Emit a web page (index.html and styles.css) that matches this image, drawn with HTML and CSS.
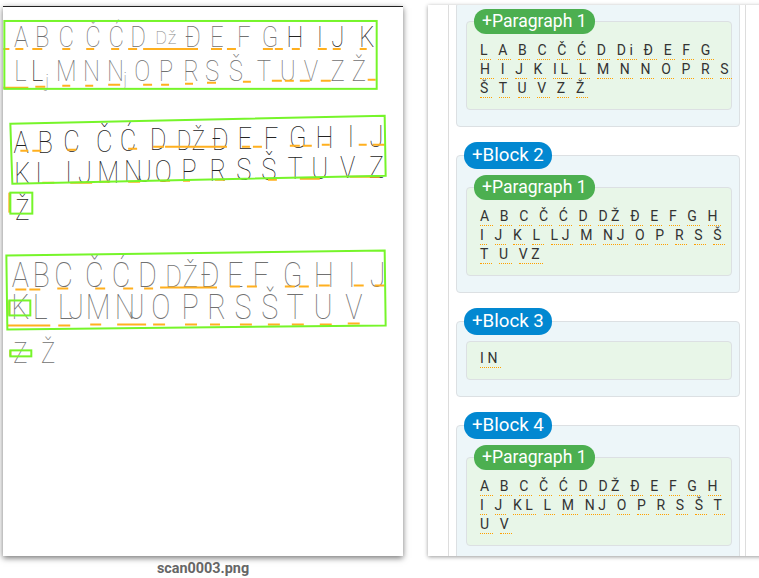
FILE: index.html
```html
<!DOCTYPE html>
<html>
<head>
    <meta charset="utf-8">
    <link rel="stylesheet" href="styles.css">
</head>
<body>
    <div class="page">
        <figure class="scan">
            <svg class="scanImage" viewBox="3 6 400 550" width="400" height="550">
                <!-- first try -->
                <g transform="scale(.8 1)">
                    <text class="hand light f30" x="26 52.5 82.5 116 145 172.5" y="46">ABCČĆD</text>
                    <text class="hand light f30" x="241 271 305 337.5" y="46">ĐEFG</text>
                    <text class="hand dark f30" x="369 400 422.5 459" y="46">HIJK</text>
                    <text class="hand light f30" x="25" y="80">L</text>
                    <text class="hand dark f30" x="46" y="80">L</text>
                    <text class="hand light f30" x="82.5 114 144" y="80">MNN</text>
                    <text class="hand light f30" x="177.5 207.5 239 265 295 330 360 389 422.5 449" y="80">OPRSŠTUVZŽ</text>
                </g>
                <text class="hand small" x="161 172" y="43">Dž</text>
                <text class="hand small" x="47" y="86">j</text>
                <text class="hand small" x="125" y="84">j</text>
                <path class="mark" d="M3 48H9M15 48H23M32 48H42M62 48H70M86 48H94M111 48H119M128 48H137M143 48H198M211 48H222M227 48H236M263 48H273M275 48H283M292 48H300M318 48H327M333 48H341M360 48H367"/>
                <path class="mark" d="M3 87H28M35 86H45M62 85H70M85 85H93M108 84H120M143 84H152M161 84H169M185 83H193M207 82H216M243 81H251M272 80H282M285 80H294M300 80H310M321 80H331M368 79H376"/>
                <rect class="box" x="4" y="20" width="373" height="68"/>

                <!-- second try, the sheet is a bit skewed here -->
                <g transform="scale(.8 1)">
                    <text class="hand dark f32" x="26 56 89 130 160 197.5" y="152 152 151 151 150 149">ABCČĆD</text>
                    <text class="hand dark f28" x="230" y="149">D</text>
                    <text class="hand dark f28" x="248" y="149">Ž</text>
                    <text class="hand dark f32" x="275 306 339 372.5 406 439 471" y="149 148 148 147 147 146 146">ĐEFGHIJ</text>
                    <text class="hand dark f32" x="27.5 52.5 90 106 135 166 181 204 236 272.5 305 336 369 400 435 471" y="183 183 182 182 182 181 181 181 180 180 179 179 178 178 177 177">KLLJMNJOPRSŠTUVZ</text>
                </g>
                <path class="mark" d="M20 150H28M32 150H41M67 149H76M128 148H137M153 146H164M165 146H227M242 146H250M253 146H262M290 145H300M303 145H312M322 144H330M359 144H367M373 144H385"/>
                <path class="mark" d="M42 182H54M70 182H92M100 181H110M128 181H140M160 180H170M183 180H190M215 179H225M268 179H277M300 178H320M350 176H380"/>
                <polygon class="box" points="10,123 385,115 386,175 12,183"/>
                <g transform="scale(.8 1)">
                    <text class="hand dark f30" x="27.5" y="219">Ž</text>
                </g>
                <path class="mark" d="M9 192V212"/>
                <rect class="box" x="10" y="192" width="22" height="21"/>

                <!-- third try -->
                <g transform="scale(.8 1)">
                    <text class="hand light f36" x="25 51 79 117.5 151 184" y="287">ABCČĆD</text>
                    <text class="hand light f32" x="217" y="287">D</text>
                    <text class="hand light f32" x="238" y="287">Ž</text>
                    <text class="hand light f36" x="262.5 294 326 366 405 440 472.5" y="287">ĐEFGHIJ</text>
                    <text class="hand light f36" x="25 50 81 95 122.5 156 171 201 237.5 271 304 337.5 369 404 442.5" y="319">KLLJMNJOPRSŠTUV</text>
                    <text class="hand light f30" x="25 60" y="363">ZŽ</text>
                </g>
                <path class="mark" d="M15 289H26M29 289H40M57 288H68M95 288H105M123 288H133M144 288H153M160 287H217M230 286H240M247 286H257M285 286H295M299 286H309M319 285H330M354 285H364M375 285H385"/>
                <path class="mark" d="M7 325H50M58 325H70M90 324H101M117 324H146M153 324H165M185 324H197M210 324H220M240 324H252M268 324H280M292 324H304M320 324H332M348 323H360"/>
                <polygon class="box" points="6,255 385,250 386,325 7,329"/>
                <path class="mark" d="M9 300V315M10 350V356"/>
                <rect class="box" x="9" y="300" width="21" height="15"/>
                <rect class="box" x="10" y="350" width="21" height="6"/>
            </svg>
            <figcaption class="caption">scan0003.png</figcaption>
        </figure>

        <div class="panel">
            <div class="stream">
                <section class="block">
                    <div class="para hasPill">
                        <div class="pill paraPill">+Paragraph 1</div>
                        <p class="words"><span>L</span> <span>A</span> <span>B</span> <span>C</span> <span>Č</span> <span>Ć</span> <span>D</span> <span>Di</span> <span>Đ</span> <span>E</span> <span>F</span> <span>G</span> <span>H</span> <span>I</span> <span>J</span> <span>K</span> <span>IL</span> <span>L</span> <span>M</span> <span>N</span> <span>N</span> <span>O</span> <span>P</span> <span>R</span> <span>S</span> <span>Š</span> <span>T</span> <span>U</span> <span>V</span> <span>Z</span> <span>Ž</span></p>
                    </div>
                </section>
                <section class="block">
                    <div class="pill blockPill">+Block 2</div>
                    <div class="para hasPill">
                        <div class="pill paraPill">+Paragraph 1</div>
                        <p class="words"><span>A</span> <span>B</span> <span>C</span> <span>Č</span> <span>Ć</span> <span>D</span> <span>DŽ</span> <span>Đ</span> <span>E</span> <span>F</span> <span>G</span> <span>H</span> <span>I</span> <span>J</span> <span>K</span> <span>L</span> <span>LJ</span> <span>M</span> <span>NJ</span> <span>O</span> <span>P</span> <span>R</span> <span>S</span> <span>Š</span> <span>T</span> <span>U</span> <span>VZ</span></p>
                    </div>
                </section>
                <section class="block">
                    <div class="pill blockPill">+Block 3</div>
                    <div class="para">
                        <p class="words"><span>IN</span></p>
                    </div>
                </section>
                <section class="block">
                    <div class="pill blockPill">+Block 4</div>
                    <div class="para hasPill">
                        <div class="pill paraPill">+Paragraph 1</div>
                        <p class="words"><span>A</span> <span>B</span> <span>C</span> <span>Č</span> <span>Ć</span> <span>D</span> <span>DŽ</span> <span>Đ</span> <span>E</span> <span>F</span> <span>G</span> <span>H</span> <span>I</span> <span>J</span> <span>KL</span> <span>L</span> <span>M</span> <span>NJ</span> <span>O</span> <span>P</span> <span>R</span> <span>S</span> <span>Š</span> <span>T</span> <span>U</span> <span>V</span></p>
                    </div>
                </section>
            </div>
        </div>
    </div>
</body>
</html>
```

FILE: styles.css
```css
html, body {
    margin: 0;
    padding: 0;
    height: 100%;
    background: #fff;
    overflow: hidden;
    font-family: Roboto, "Liberation Sans", sans-serif;
}

.page {
    display: flex;
    align-items: flex-start;
    height: 578px;
}

/* left: the scanned page */
.scan {
    margin: 6px 0 0 3px;
    width: 400px;
    flex: none;
}

.scanImage {
    display: block;
    background: #fff;
    border-top: 1px solid #222;
    box-sizing: border-box;
    box-shadow: 0 2px 6px rgba(0, 0, 0, 0.55);
}

.caption {
    margin-top: 5px;
    text-align: center;
    font-size: 14.4px;
    line-height: 16px;
    font-weight: 700;
    color: #666;
}

.hand {
    text-anchor: middle;
    font-family: Roboto, sans-serif;
    font-weight: 100;
    opacity: 0.99;
}

.hand.f28 { font-size: 28px; }
.hand.f30 { font-size: 30px; }
.hand.f32 { font-size: 32px; }
.hand.f36 { font-size: 36px; }
.hand.small { font-size: 18px; fill: #888; }
.hand.light { fill: #707070; }
.hand.dark { fill: #222; }

.mark {
    fill: none;
    stroke: #ffb01f;
    stroke-width: 2;
}

.box {
    fill: none;
    stroke: #76f52a;
    stroke-width: 2;
}

/* right: the recognised text */
.panel {
    margin: 5px 0 0 25px;
    padding: 0 14px 0 20px;
    width: 318px;
    height: 551px;
    flex: none;
    background: #fff;
    overflow: hidden;
    box-shadow: 0 1px 4px rgba(0, 0, 0, 0.4);
}

.stream {
    height: 600px;
    padding: 0 5px 0 7px;
    border-left: 1px solid #ddd;
    border-right: 1px solid #ddd;
    box-sizing: border-box;
    width: 298px;
}

.block {
    margin-top: 28px;
    padding: 0 7px 16px 9px;
    background: #edf6f9;
    border: 1px solid #dce0e3;
    border-radius: 4px;
}

.block:first-child {
    margin-top: -3px;
}

.pill {
    width: fit-content;
    color: #fff;
    white-space: nowrap;
}

.blockPill {
    margin: -14px 0 0 -2px;
    padding: 0 8px;
    height: 27px;
    line-height: 27px;
    font-size: 18.7px;
    background: #0288d1;
    border-radius: 13px;
}

.paraPill {
    margin: -13px 0 0 7px;
    padding: 0 8px;
    height: 25px;
    line-height: 25px;
    font-size: 17.6px;
    background: #4caf50;
    border-radius: 12px;
}

.para {
    margin-top: 6px;
    background: #e8f6e8;
    border: 1px solid #dce0e3;
    border-radius: 4px;
}

.para.hasPill {
    margin-top: 18px;
}

.words {
    margin: 0 -3px 0 0;
    padding: 7px 0 11px 13px;
    font-size: 14px;
    line-height: 19px;
    letter-spacing: 3.6px;
    color: #333;
}

.words span {
    padding-bottom: 1px;
    border-bottom: 1px dotted #ffa000;
}
```
